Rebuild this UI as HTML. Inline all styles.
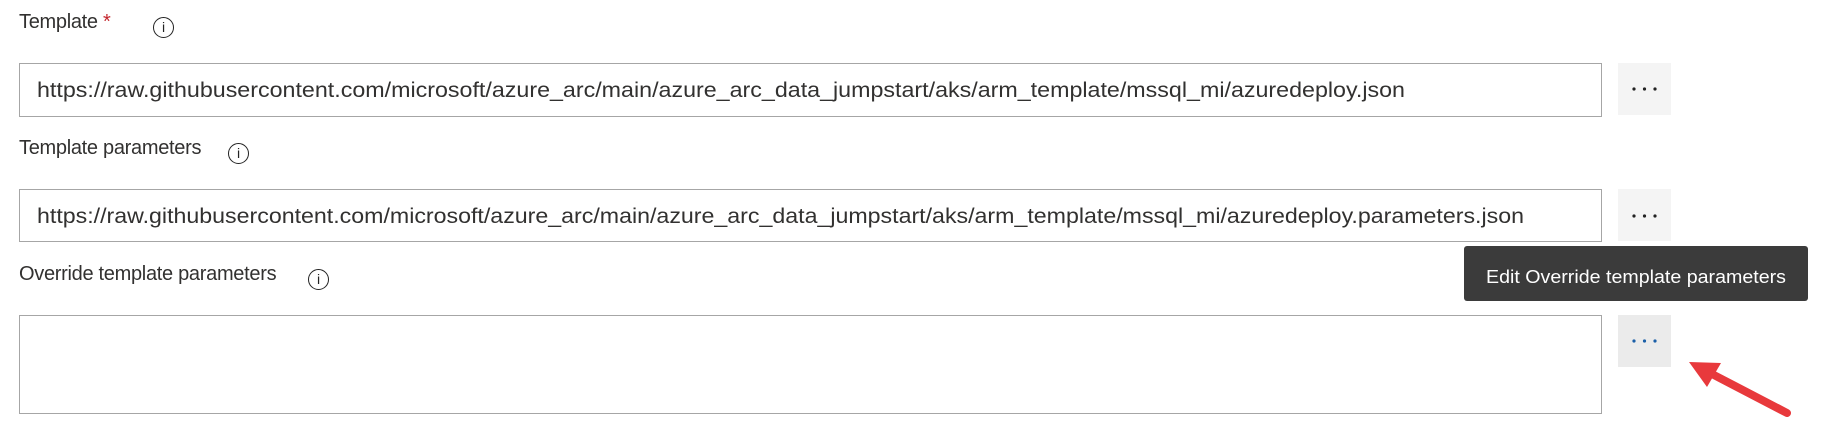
<!DOCTYPE html>
<html><head><style>
body{margin:0;width:1838px;height:431px;background:#fff;position:relative;overflow:hidden;font-family:"Liberation Sans",sans-serif;color:#323130}
.a{position:absolute}
.lbl{font-size:20px;color:#323130;letter-spacing:-0.3px}
.box{position:absolute;border:1px solid #a6a6a6;background:#fff;box-sizing:border-box}
.btn{position:absolute;width:53px;height:52px;background:#f4f4f4}
.info{position:absolute;width:21px;height:21px;border:1.5px solid #222;border-radius:50%;box-sizing:border-box;font-size:14px;text-align:center;line-height:19px;color:#222}
</style></head><body>
<div class="a lbl" style="left:19px;top:11px">Template <span style="color:#c4262e">*</span></div>
<div class="info" style="left:153px;top:17px">i</div>
<div class="box" style="left:19px;top:63px;width:1583px;height:54px"></div>
<div class="btn" style="left:1618px;top:63px"></div>
<div class="a lbl" style="left:19px;top:137px">Template parameters</div>
<div class="info" style="left:228px;top:143px">i</div>
<div class="box" style="left:19px;top:189px;width:1583px;height:53px"></div>
<div class="btn" style="left:1618px;top:189px"></div>
<div class="a lbl" style="left:19px;top:263px">Override template parameters</div>
<div class="info" style="left:308px;top:269px">i</div>
<div class="box" style="left:19px;top:315px;width:1583px;height:99px"></div>
<div class="btn" style="left:1618px;top:315px;background:#ebebeb"></div>
<svg class="a" style="left:0;top:0" width="1838" height="431">
<text x="37" y="97" font-family="Liberation Sans" font-size="21" fill="#323130" textLength="1368" lengthAdjust="spacingAndGlyphs">https://raw.githubusercontent.com/microsoft/azure_arc/main/azure_arc_data_jumpstart/aks/arm_template/mssql_mi/azuredeploy.json</text>
<text x="37" y="223" font-family="Liberation Sans" font-size="21" fill="#323130" textLength="1487" lengthAdjust="spacingAndGlyphs">https://raw.githubusercontent.com/microsoft/azure_arc/main/azure_arc_data_jumpstart/aks/arm_template/mssql_mi/azuredeploy.parameters.json</text>
<g fill="#222"><circle cx="1634" cy="89" r="1.6"/><circle cx="1644.5" cy="89" r="1.6"/><circle cx="1655" cy="89" r="1.6"/>
<circle cx="1634" cy="216" r="1.6"/><circle cx="1644.5" cy="216" r="1.6"/><circle cx="1655" cy="216" r="1.6"/></g>
<g fill="#1a5fa8"><circle cx="1634" cy="341" r="1.6"/><circle cx="1644.5" cy="341" r="1.6"/><circle cx="1655" cy="341" r="1.6"/></g>
<rect x="1464" y="246" width="344" height="55" rx="3" fill="#3b3b3b"/>
<text x="1486" y="283" font-family="Liberation Sans" font-size="18.5" fill="#fff" textLength="300" lengthAdjust="spacingAndGlyphs">Edit Override template parameters</text>
<line x1="1787" y1="413" x2="1712" y2="374" stroke="#e8393c" stroke-width="8" stroke-linecap="round"/>
<polygon points="1689,362 1721,363 1707,387" fill="#e8393c"/>
</svg>
</body></html>
